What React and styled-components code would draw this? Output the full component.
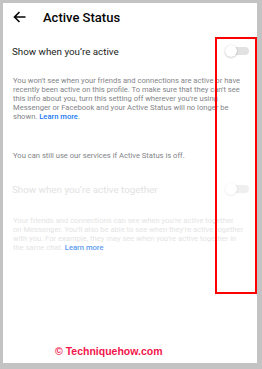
import React from "react";
import styled, { createGlobalStyle } from "styled-components";

const Global = createGlobalStyle`
  html, body {
    margin: 0;
    padding: 0;
    background: #c3c3c3;
  }
  body {
    font-family: Roboto, "Liberation Sans", sans-serif;
  }
`;

const Frame = styled.div`
  width: 262px;
  height: 369px;
  padding: 3px 5px 6px 3px;
  box-sizing: border-box;
`;

const Screen = styled.div`
  position: relative;
  height: 100%;
  background: #fff;
  display: flex;
  flex-direction: column;
`;

const Header = styled.div`
  display: flex;
  align-items: center;
  height: 28px;
  padding-left: 10px;
  gap: 17px;
`;

const Title = styled.h1`
  margin: 0;
  font-size: 13px;
  font-weight: 500;
  color: #050505;
`;

const Row = styled.div`
  display: flex;
  align-items: center;
  justify-content: space-between;
  height: 24px;
  padding: 0 8px 0 9px;
  margin-top: ${(p) => p.top || 0}px;
`;

const Label = styled.span`
  font-size: 9.8px;
  color: ${(p) => (p.faded ? "#e2e2e2" : "#1c1e21")};
`;

const Track = styled.div`
  position: relative;
  width: 20px;
  height: 8px;
  border-radius: 4px;
  background: ${(p) => (p.faded ? "#efefef" : "#e2e2e2")};
`;

const Knob = styled.div`
  position: absolute;
  left: -4px;
  top: -2px;
  width: 12px;
  height: 12px;
  border-radius: 50%;
  background: #fff;
  box-shadow: 0 0.5px 2px rgba(0, 0, 0, ${(p) => (p.faded ? 0.12 : 0.3)});
`;

const Para = styled.p`
  margin: ${(p) => p.top || 0}px 0 0;
  padding: 0 ${(p) => (p.faded ? 4 : 9)}px 0 10px;
  font-size: 7.6px;
  line-height: 8.9px;
  color: ${(p) => (p.faded ? "#e4e4e4" : "#838589")};
`;

const Link = styled.span`
  color: ${(p) => (p.faded ? "#5a9cf0" : "#1877f2")};
  font-weight: 500;
`;

const Highlight = styled.div`
  position: absolute;
  left: 212px;
  top: 34px;
  width: 42px;
  height: 257px;
  border: 2.5px solid #ff0000;
  box-sizing: border-box;
`;

const Watermark = styled.div`
  margin-top: auto;
  margin-bottom: 6px;
  padding-left: 52px;
  font-family: "Liberation Sans", Arial, sans-serif;
  font-weight: 700;
  font-size: 10.5px;
  color: #f2164c;
`;

const Toggle = ({ faded }) => (
  <Track faded={faded}>
    <Knob faded={faded} />
  </Track>
);

const Back = () => (
  <svg width="13" height="12" viewBox="0 0 13 12" fill="none" stroke="#050505" strokeWidth="1.6">
    <path d="M12.5 6H1.5M6.5 1L1.5 6l5 5" />
  </svg>
);

export default function App() {
  return (
    <Frame>
      <Global />
      <Screen>
        <Header>
          <Back />
          <Title>Active Status</Title>
        </Header>
        <Row top={8}>
          <Label>Show when you’re active</Label>
          <Toggle />
        </Row>
        <Para top={14}>
          You won't see when your friends and connections are active or have recently been
          active on this profile. To make sure that they can't see this info about you, turn
          this setting off wherever you're using Messenger or Facebook and your Active Status
          will no longer be shown. <Link>Learn more</Link>.
        </Para>
        <Para top={30}>You can still use our services if Active Status is off.</Para>
        <Row top={17}>
          <Label faded>Show when you’re active together</Label>
          <Toggle faded />
        </Row>
        <Para faded top={16}>
          Your friends and connections can see when you're active together
          <br />
          on Messenger. You'll also be able to see when they're active together
          <br />
          with you. For example, they may see when you're active together in
          <br />
          the same chat. <Link faded>Learn more</Link>
        </Para>
        <Watermark>© Techniquehow.com</Watermark>
        <Highlight />
      </Screen>
    </Frame>
  );
}
